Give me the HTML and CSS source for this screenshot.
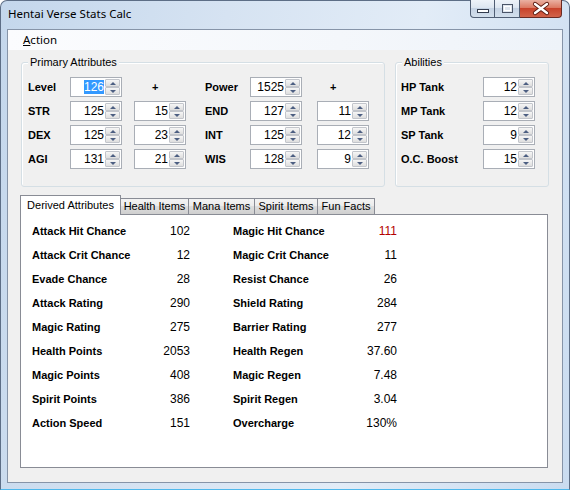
FILE: index.html
```html
<!DOCTYPE html>
<html lang="en">
<head>
    <meta charset="UTF-8">
    <title>Hentai Verse Stats Calc</title>
    <link rel="stylesheet" href="styles.css">
</head>
<body>
    <div class="window">
        <div class="titlebar">
            <span class="title">Hentai Verse Stats Calc</span>
            <div class="caption">
                <span class="cap min">
                    <svg width="24" height="17" viewBox="0 0 24 17"><rect x="6.5" y="9.5" width="11" height="3" fill="#fff" stroke="#333c4e"/></svg>
                </span>
                <span class="cap max">
                    <svg width="25" height="17" viewBox="0 0 25 17"><rect x="7.5" y="4.5" width="10" height="8" fill="#dfe6ef" stroke="#4b5568"/><rect x="9.5" y="6.5" width="6" height="4" fill="none" stroke="#fff"/></svg>
                </span>
                <span class="cap close">
                    <svg width="42" height="17" viewBox="0 0 42 17"><path d="M15 4 L27 13 M27 4 L15 13" stroke="#5a1a10" stroke-width="4.2" stroke-linecap="round"/><path d="M15 4 L27 13 M27 4 L15 13" stroke="#fff" stroke-width="2.4" stroke-linecap="round"/></svg>
                </span>
            </div>
        </div>

        <div class="client">
            <div class="menubar">
                <span class="menu-item"><u>A</u>ction</span>
            </div>

            <div class="top">
                <div class="group primary">
                    <span class="group-title">Primary Attributes</span>
                    <div class="primary-grid">
                        <b>Level</b>
                        <div class="spin"><span class="val"><span class="sel">126</span></span><span class="arrows"><i class="up"></i><i class="down"></i></span></div>
                        <b class="plus plus-a">+</b>
                        <b>Power</b>
                        <div class="spin"><span class="val">1525</span><span class="arrows"><i class="up"></i><i class="down"></i></span></div>
                        <b class="plus plus-b">+</b>

                        <b>STR</b>
                        <div class="spin"><span class="val">125</span><span class="arrows"><i class="up"></i><i class="down"></i></span></div>
                        <div class="spin"><span class="val">15</span><span class="arrows"><i class="up"></i><i class="down"></i></span></div>
                        <b>END</b>
                        <div class="spin"><span class="val">127</span><span class="arrows"><i class="up"></i><i class="down"></i></span></div>
                        <div class="spin"><span class="val">11</span><span class="arrows"><i class="up"></i><i class="down"></i></span></div>

                        <b>DEX</b>
                        <div class="spin"><span class="val">125</span><span class="arrows"><i class="up"></i><i class="down"></i></span></div>
                        <div class="spin"><span class="val">23</span><span class="arrows"><i class="up"></i><i class="down"></i></span></div>
                        <b>INT</b>
                        <div class="spin"><span class="val">125</span><span class="arrows"><i class="up"></i><i class="down"></i></span></div>
                        <div class="spin"><span class="val">12</span><span class="arrows"><i class="up"></i><i class="down"></i></span></div>

                        <b>AGI</b>
                        <div class="spin"><span class="val">131</span><span class="arrows"><i class="up"></i><i class="down"></i></span></div>
                        <div class="spin"><span class="val">21</span><span class="arrows"><i class="up"></i><i class="down"></i></span></div>
                        <b>WIS</b>
                        <div class="spin"><span class="val">128</span><span class="arrows"><i class="up"></i><i class="down"></i></span></div>
                        <div class="spin"><span class="val">9</span><span class="arrows"><i class="up"></i><i class="down"></i></span></div>
                    </div>
                </div>

                <div class="group abilities">
                    <span class="group-title">Abilities</span>
                    <div class="abilities-grid">
                        <b>HP Tank</b>
                        <div class="spin"><span class="val">12</span><span class="arrows"><i class="up"></i><i class="down"></i></span></div>
                        <b>MP Tank</b>
                        <div class="spin"><span class="val">12</span><span class="arrows"><i class="up"></i><i class="down"></i></span></div>
                        <b>SP Tank</b>
                        <div class="spin"><span class="val">9</span><span class="arrows"><i class="up"></i><i class="down"></i></span></div>
                        <b>O.C. Boost</b>
                        <div class="spin"><span class="val">15</span><span class="arrows"><i class="up"></i><i class="down"></i></span></div>
                    </div>
                </div>
            </div>

            <div class="tabs">
                <div class="tab-strip">
                    <span class="tab active derived">Derived Attributes</span>
                    <span class="tab health">Health Items</span>
                    <span class="tab mana">Mana Items</span>
                    <span class="tab spirit">Spirit Items</span>
                    <span class="tab fun">Fun Facts</span>
                </div>
                <div class="tab-page">
                    <div class="stats">
                        <b>Attack Hit Chance</b><span class="num">102</span>
                        <b class="second">Magic Hit Chance</b><span class="num bad">111</span>

                        <b>Attack Crit Chance</b><span class="num">12</span>
                        <b class="second">Magic Crit Chance</b><span class="num">11</span>

                        <b>Evade Chance</b><span class="num">28</span>
                        <b class="second">Resist Chance</b><span class="num">26</span>

                        <b>Attack Rating</b><span class="num">290</span>
                        <b class="second">Shield Rating</b><span class="num">284</span>

                        <b>Magic Rating</b><span class="num">275</span>
                        <b class="second">Barrier Rating</b><span class="num">277</span>

                        <b>Health Points</b><span class="num">2053</span>
                        <b class="second">Health Regen</b><span class="num">37.60</span>

                        <b>Magic Points</b><span class="num">408</span>
                        <b class="second">Magic Regen</b><span class="num">7.48</span>

                        <b>Spirit Points</b><span class="num">386</span>
                        <b class="second">Spirit Regen</b><span class="num">3.04</span>

                        <b>Action Speed</b><span class="num">151</span>
                        <b class="second">Overcharge</b><span class="num">130%</span>
                    </div>
                </div>
            </div>
        </div>
    </div>
</body>
</html>
```

FILE: styles.css
```css
* {
    box-sizing: border-box;
}
body {
    margin: 0;
    font-family: "Liberation Sans", Arial, sans-serif;
    font-size: 11px;
    color: #000;
}
.window {
    width: 570px;
    height: 490px;
    display: flex;
    flex-direction: column;
    border: 1px solid #5d6e86;
    border-bottom-color: #4fb8ec;
    border-radius: 7px 7px 0 0;
    padding: 0 6px 6px;
    background: linear-gradient(100deg, #c4d7ec 0%, #d6e3f2 35%, #e2ecf7 65%, #cadcf0 100%);
}
.titlebar {
    height: 29px;
    margin-top: -1px;
    display: flex;
    align-items: flex-start;
    flex-shrink: 0;
}
.title {
    flex: 1;
    padding: 6px 0 0 1px;
    font-family: "Noto Sans", "Liberation Sans", sans-serif;
    font-size: 11.5px;
    line-height: 16px;
}
.caption {
    display: flex;
    margin-right: 1px;
}
.cap {
    display: block;
    height: 18px;
    border: 1px solid #4f5d73;
    border-top: none;
    border-left: none;
    background: linear-gradient(#eef3f9 0%, #dde6f1 45%, #c5d3e4 50%, #d3dfec 100%);
}
.cap svg {
    display: block;
}
.min {
    width: 25px;
    border-left: 1px solid #4f5d73;
    border-bottom-left-radius: 4px;
}
.max {
    width: 25px;
}
.close {
    width: 42px;
    border-color: #6a2a22;
    border-bottom-right-radius: 4px;
    background: linear-gradient(#eab1a2 0%, #dc7a63 45%, #c8432b 50%, #d2634a 100%);
}

.client {
    flex: 1;
    display: flex;
    flex-direction: column;
    border: 1px solid #8694a8;
    background: #f0f0f0;
}
.menubar {
    height: 20px;
    padding-left: 15px;
    line-height: 20px;
    font-family: "Noto Sans", "Liberation Sans", sans-serif;
    font-size: 11.5px;
    background: linear-gradient(to right, #fbfcfe, #f4f7fb 60%, #eef3f9);
}

.top {
    display: flex;
    gap: 10px;
    margin: 12px 0 0 13px;
}
.group {
    height: 125px;
    border: 1px solid #d5dfe5;
    border-radius: 3px;
    box-shadow: inset 1px 1px 0 #fff;
}
.primary {
    width: 364px;
}
.abilities {
    width: 154px;
}
.group-title {
    display: block;
    width: fit-content;
    margin: -7px 0 0 6px;
    padding: 0 2px;
    line-height: 13px;
    background: #f0f0f0;
}
.primary-grid {
    display: grid;
    grid-template-columns: 42px 64px 71px 45px 67px 52px;
    grid-auto-rows: 20px;
    row-gap: 4px;
    align-items: center;
    margin-top: 8px;
    padding-left: 6px;
}
.abilities-grid {
    display: grid;
    grid-template-columns: 82px 52px;
    grid-auto-rows: 20px;
    row-gap: 4px;
    align-items: center;
    margin-top: 8px;
    padding-left: 5px;
}
.plus-a {
    padding-left: 18px;
}
.plus-b {
    padding-left: 13px;
}

.spin {
    width: 52px;
    height: 20px;
    display: flex;
    padding: 1px;
    border: 1px solid #a9aeb6;
    background: #fff;
}
.val {
    flex: 1;
    text-align: right;
    line-height: 16px;
    padding-right: 1px;
    font-size: 12px;
}
.sel {
    display: inline-block;
    line-height: 14px;
    margin-top: 1px;
    background: #3399ff;
    color: #fff;
}
.arrows {
    width: 15px;
    display: flex;
    flex-direction: column;
}
.arrows i {
    flex: 1;
    display: flex;
    align-items: center;
    justify-content: center;
    border: 1px solid #c2c5cb;
    border-radius: 1px;
    background: linear-gradient(#f6f6f6, #dedede);
}
.arrows i::after {
    content: "";
    border-left: 3px solid transparent;
    border-right: 3px solid transparent;
}
.up::after {
    border-bottom: 3px solid #4d5f82;
}
.down::after {
    border-top: 3px solid #4d5f82;
}

.tabs {
    flex: 1;
    display: flex;
    flex-direction: column;
    margin: 8px 14px 14px 12px;
}
.tab-strip {
    height: 19px;
    display: flex;
    align-items: flex-end;
}
.tab {
    height: 16px;
    margin-left: -1px;
    border: 1px solid #898c95;
    border-bottom: none;
    text-align: center;
    line-height: 15px;
    background: linear-gradient(#f3f3f3 0%, #ebebeb 50%, #dddddd 50%, #cfcfcf 100%);
}
.tab.active {
    position: relative;
    z-index: 1;
    height: 20px;
    margin: 0 0 -1px 0;
    line-height: 18px;
    background: #fff;
}
.derived { width: 101px; }
.health { width: 69px; }
.mana { width: 67px; }
.spirit { width: 64px; }
.fun { width: 58px; }
.tab-page {
    flex: 1;
    border: 1px solid #898c95;
    background: #fff;
    padding: 4px 0 0 11px;
}
.stats {
    display: grid;
    grid-template-columns: 110px 48px 153px 54px;
    grid-auto-rows: 24px;
    align-items: center;
}
.stats .second {
    padding-left: 43px;
}
.num {
    text-align: right;
    font-size: 12px;
}
.num.bad {
    color: #b30000;
}
```
